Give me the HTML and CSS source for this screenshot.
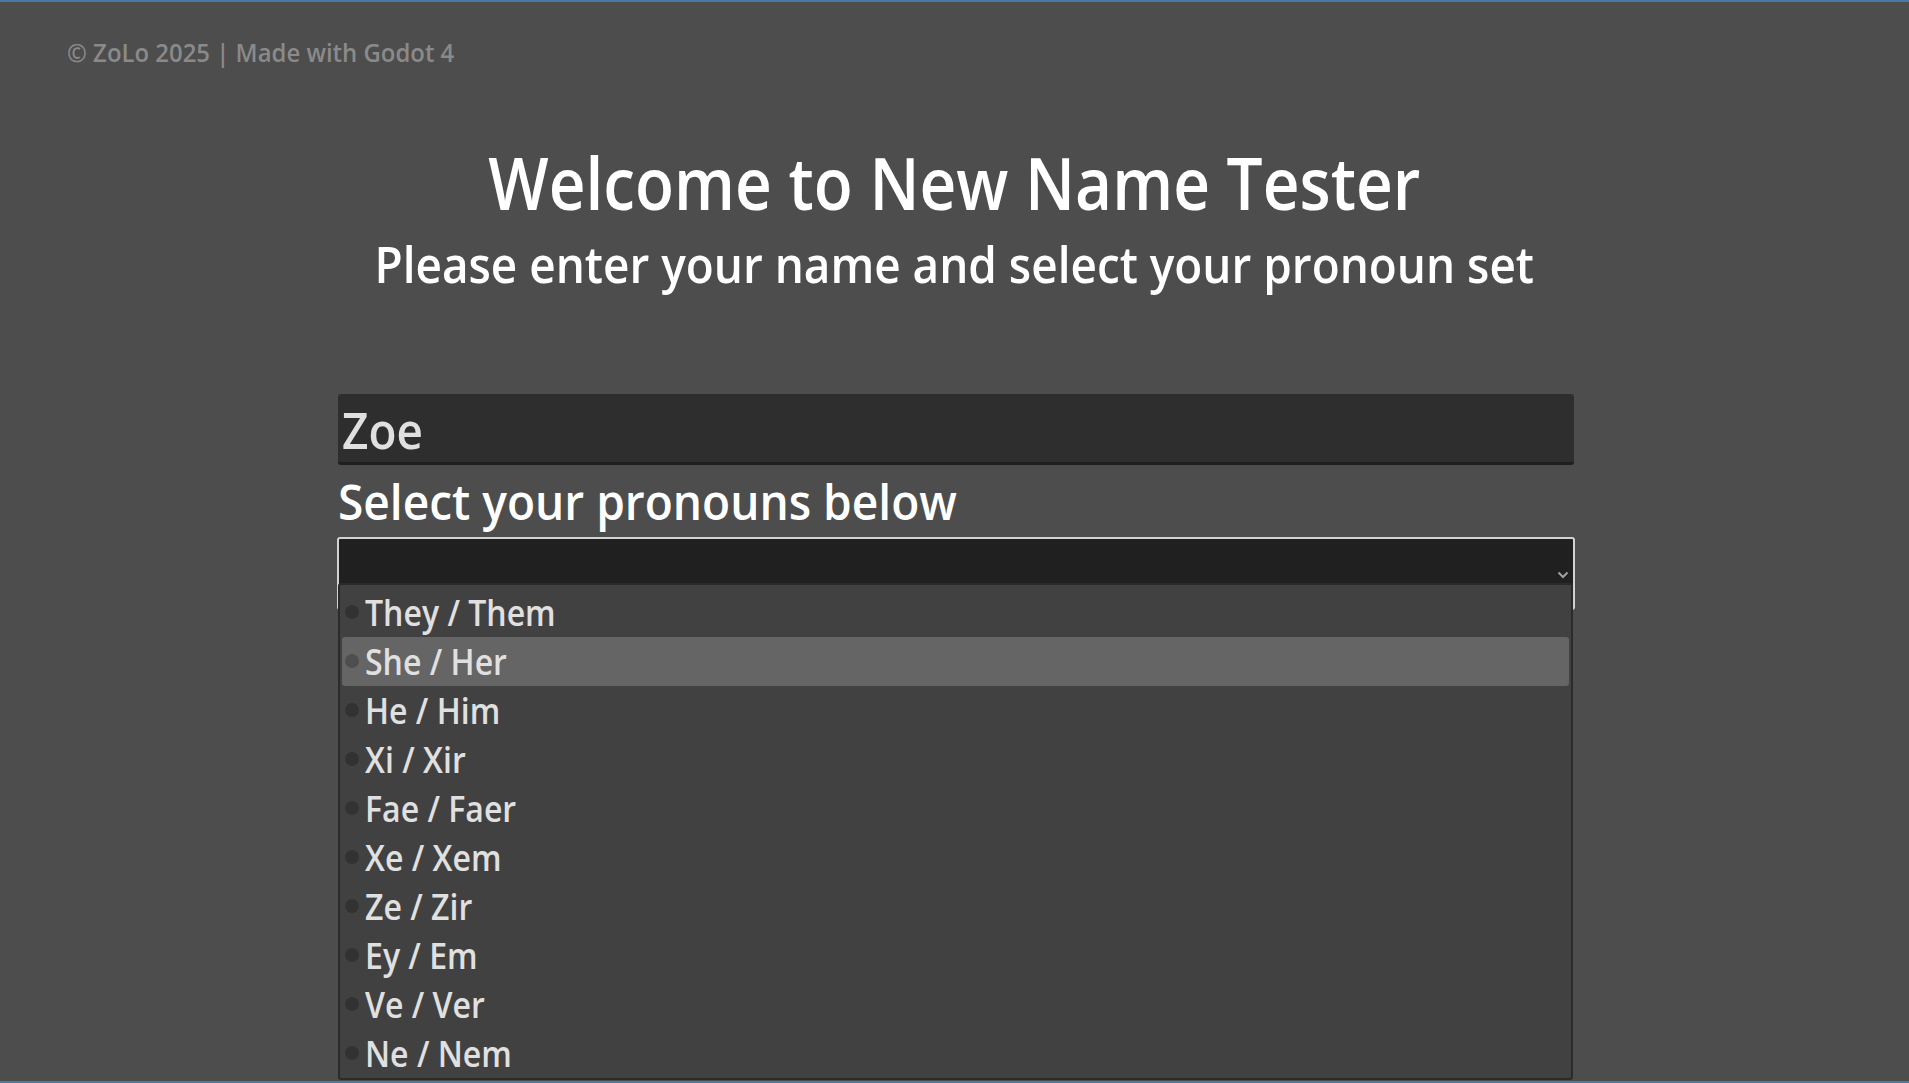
FILE: index.html
```html
<!DOCTYPE html>
<html lang="en">
<head>
<meta charset="utf-8">
<title>New Name Tester</title>
<link rel="stylesheet" href="styles.css">
</head>
<body>
<div class="frame">
  <div class="footer"><span class="txt">© ZoLo 2025 | Made with Godot 4</span></div>
  <h1 class="title"><span class="txt">Welcome to New Name Tester</span></h1>
  <h2 class="subtitle"><span class="txt">Please enter your name and select your pronoun set</span></h2>
  <div class="form">
    <div class="name-input"><span class="txt">Zoe</span></div>
    <div class="label"><span class="txt">Select your pronouns below</span></div>
    <div class="dropdown-wrap">
      <div class="dropdown">
        <svg class="chevron" width="12" height="8" viewBox="0 0 12 8"><path d="M1.5 1.5 L6 6 L10.5 1.5" fill="none" stroke="#a0a0a0" stroke-width="2"/></svg>
      </div>
      <div class="popup">
        <div class="item"><span class="dot"></span><span class="txt">They / Them</span></div>
        <div class="item hover"><span class="dot"></span><span class="txt">She / Her</span></div>
        <div class="item"><span class="dot"></span><span class="txt">He / Him</span></div>
        <div class="item"><span class="dot"></span><span class="txt">Xi / Xir</span></div>
        <div class="item"><span class="dot"></span><span class="txt">Fae / Faer</span></div>
        <div class="item"><span class="dot"></span><span class="txt">Xe / Xem</span></div>
        <div class="item"><span class="dot"></span><span class="txt">Ze / Zir</span></div>
        <div class="item"><span class="dot"></span><span class="txt">Ey / Em</span></div>
        <div class="item"><span class="dot"></span><span class="txt">Ve / Ver</span></div>
        <div class="item"><span class="dot"></span><span class="txt">Ne / Nem</span></div>
      </div>
    </div>
  </div>
</div>
</body>
</html>
```
FILE: styles.css
```css
html, body {
  margin: 0;
  padding: 0;
  background: #4d4d4d;
}
body {
  font-family: "Open Sans", "Noto Sans", sans-serif;
  font-weight: 600;
  overflow: hidden;
}
.txt {
  display: inline-block;
  white-space: nowrap;
  transform-origin: left center;
}
.frame {
  height: 1083px;
  box-sizing: border-box;
  border-top: 2px solid #4a79a5;
  border-bottom: 2px solid #4a79a5;
  background: #4d4d4d;
  overflow: hidden;
}
.footer {
  padding: 32px 0 0 67px;
  font-size: 26px;
  line-height: 36px;
  color: #8a8a8a;
  height: 36px;
}
.footer .txt {
  transform: scaleX(0.92);
}
.title {
  margin: 70px 0 0;
  font-size: 71.5px;
  line-height: 86px;
  font-weight: 600;
  color: #ffffff;
  text-align: center;
}
.title .txt {
  transform-origin: center center;
  transform: scaleX(0.894);
}
.subtitle {
  margin: 6.5px 0 0;
  font-size: 51px;
  line-height: 60px;
  font-weight: 600;
  color: #ffffff;
  text-align: center;
}
.subtitle .txt {
  transform-origin: center center;
  transform: scaleX(0.90);
}
.form {
  margin: 101.5px 0 0 338px;
  width: 1236px;
}
.name-input {
  height: 66px;
  padding: 2px 0 0 4px;
  line-height: 66px;
  font-size: 51px;
  color: #e0e0e0;
  background: #2e2e2e;
  border-bottom: 3px solid #1e1e1e;
  border-radius: 3px;
}
.name-input .txt {
  transform: scaleX(0.90);
}
.label {
  margin-top: 5.5px;
  font-size: 49px;
  line-height: 60px;
  color: #ffffff;
}
.label .txt {
  transform: scaleX(0.94);
}
.dropdown-wrap {
  position: relative;
  margin: 6.5px -1px 0;
}
.dropdown {
  height: 69px;
  background: #202020;
  border: 2px solid #d2d2d2;
  border-radius: 3px;
  display: flex;
  justify-content: flex-end;
  align-items: flex-start;
}
.chevron {
  margin: 32px 4px 0 0;
}
.popup {
  position: absolute;
  top: 46px;
  left: 1px;
  width: 1235px;
  box-sizing: border-box;
  background: #414141;
  border: 2px solid #2b2b2b;
  border-radius: 3px;
  padding: 3px 2px 0;
  height: 497px;
}
.item {
  height: 49px;
  display: flex;
  align-items: center;
  padding-left: 3px;
  font-size: 36px;
  line-height: 49px;
  color: #e0e0e0;
  border-radius: 3px;
}
.item .txt {
  transform: scaleX(0.89);
}
.item.hover {
  background: #656565;
}
.dot {
  width: 14px;
  height: 14px;
  border-radius: 50%;
  background: rgba(0, 0, 0, 0.22);
  margin-right: 6px;
  flex: none;
  position: relative;
  top: -1px;
}
```
